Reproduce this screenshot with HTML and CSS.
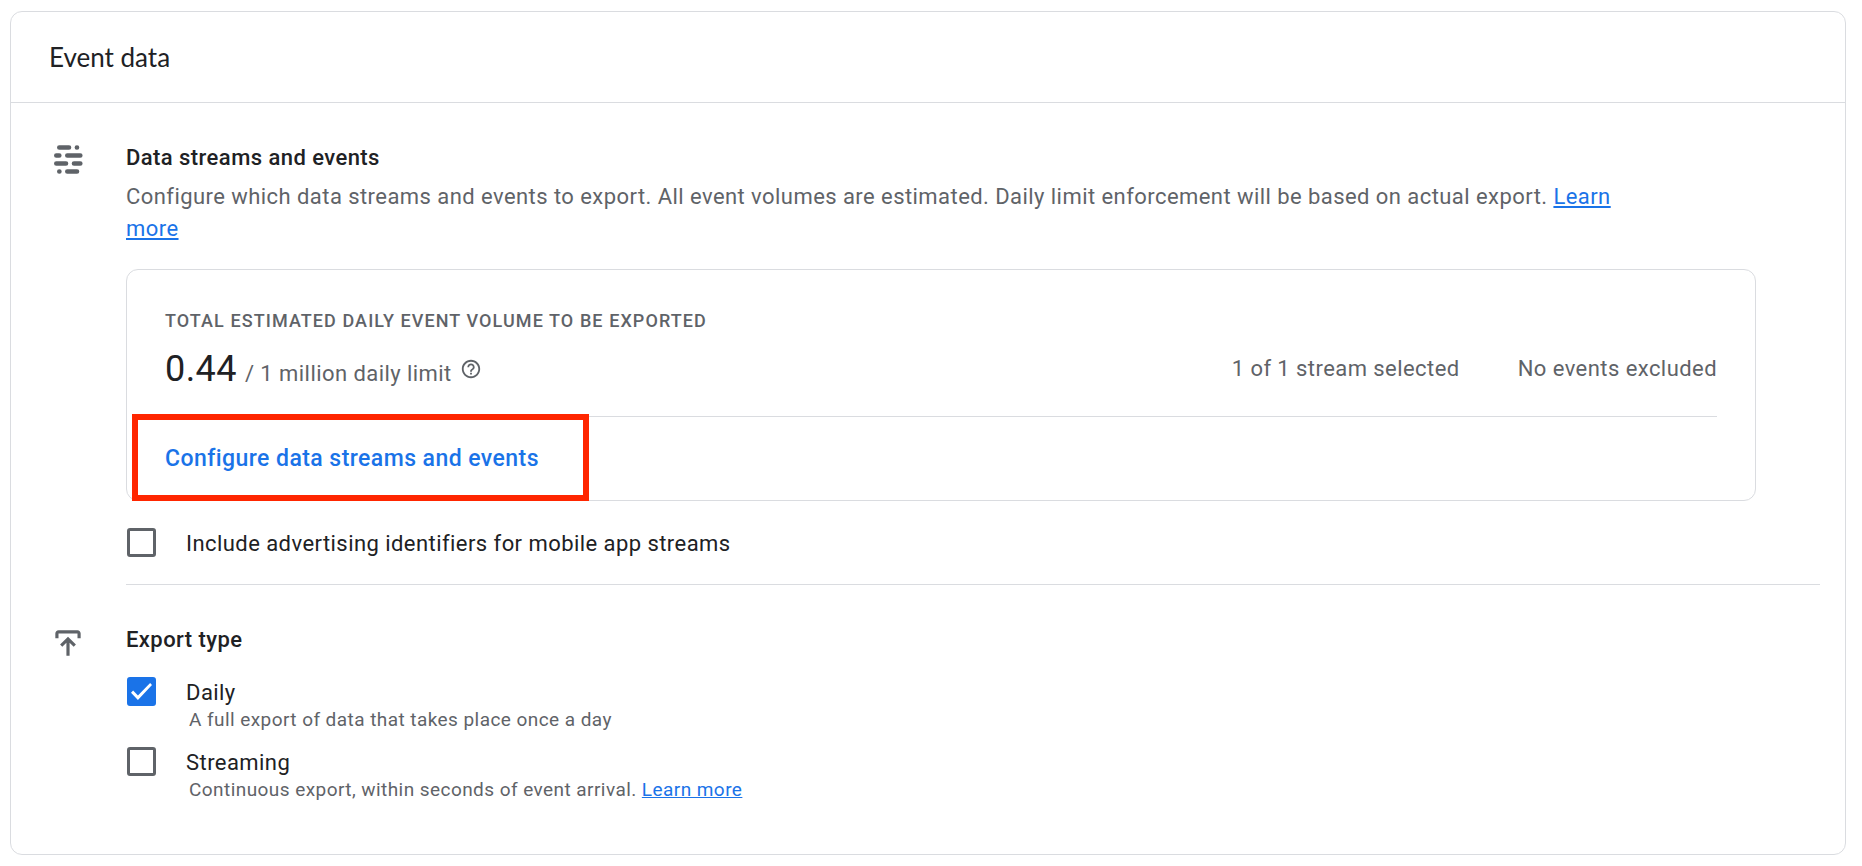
FILE: index.html
```html
<!DOCTYPE html>
<html lang="en">
    <head>
        <meta charset="utf-8">
        <title>Event data</title>
        <link rel="stylesheet" href="styles.css">
    </head>
    <body>
        <main class="card">
            <header class="card-header">
                <h1>Event data</h1>
            </header>

            <section class="section">
                <svg class="section-icon" viewBox="0 0 38 38" aria-hidden="true">
                    <g fill="none" stroke="currentColor" stroke-width="4.6" stroke-linecap="round">
                        <path d="M10.3 5.5H20M27.9 5.5h.1M7.3 13.5h3M18.3 13.5h13M7.3 21.5H17M25 21.5h6.3M10.3 29.5h.1M18.3 29.5H28"/>
                    </g>
                </svg>
                <div class="section-body with-divider">
                    <h2>Data streams and events</h2>
                    <p class="description">Configure which data streams and events to export. All event volumes are estimated. Daily limit enforcement will be based on actual export. <a href="#">Learn more</a></p>

                    <div class="volume">
                        <h3>Total estimated daily event volume to be exported</h3>
                        <div class="volume-row">
                            <p class="volume-total">
                                <span class="volume-number">0.44</span>
                                <span>/ 1 million daily limit</span>
                                <svg class="help-icon" viewBox="0 0 24 24" role="img" aria-label="Help">
                                    <path fill="currentColor" d="M11 18h2v-2h-2v2zm1-16C6.48 2 2 6.48 2 12s4.48 10 10 10 10-4.48 10-10S17.52 2 12 2zm0 18c-4.41 0-8-3.59-8-8s3.59-8 8-8 8 3.59 8 8-3.59 8-8 8zm0-14c-2.21 0-4 1.79-4 4h2c0-1.100.900-2 2-2s2 .9 2 2c0 2-3 1.750-3 5h2c0-2.250 3-2.500 3-5 0-2.210-1.790-4-4-4z"/>
                                </svg>
                            </p>
                            <p>1 of 1 stream selected</p>
                            <p>No events excluded</p>
                        </div>
                        <div class="volume-actions">
                            <button type="button">Configure data streams and events</button>
                        </div>
                        <div class="highlight"></div>
                    </div>

                    <div class="option">
                        <input type="checkbox" id="ad-ids">
                        <label for="ad-ids">Include advertising identifiers for mobile app streams</label>
                    </div>
                </div>
            </section>

            <section class="section">
                <svg class="section-icon" viewBox="0 0 24 24" aria-hidden="true">
                    <path fill="currentColor" d="M4 9V6c0-1.100.900-2 2-2h12c1.100 0 2 .9 2 2v3h-2V6H6v3zM11 20v-8.200l-2.600 2.600L7 13l5-5 5 5-1.400 1.400-2.600-2.600V20z"/>
                </svg>
                <div class="section-body">
                    <h2>Export type</h2>
                    <div class="option-list">
                        <div class="option">
                            <input type="checkbox" id="daily" checked>
                            <label for="daily">Daily</label>
                            <p class="hint">A full export of data that takes place once a day</p>
                        </div>
                        <div class="option">
                            <input type="checkbox" id="streaming">
                            <label for="streaming">Streaming</label>
                            <p class="hint">Continuous export, within seconds of event arrival. <a href="#">Learn more</a></p>
                        </div>
                    </div>
                </div>
            </section>
        </main>
    </body>
</html>
```
FILE: styles.css
```css
:root {
    --text-clr: #202124;
    --muted-clr: #5f6368;
    --link-clr: #1a73e8;
    --border-clr: #dadce0;
    --highlight-clr: #ff2600;
}

* {
    box-sizing: border-box;
}

body {
    margin: 11px 16px 11px 10px;
    background-color: #fff;
    color: var(--text-clr);
    font-family: Roboto, sans-serif;
    font-size: 22px;
    line-height: 32px;
    letter-spacing: 0.02em;
}

h1, h2, h3, p {
    margin: 0;
}

a {
    color: var(--link-clr);
}

.card {
    border: 1px solid var(--border-clr);
    border-radius: 12px;
    padding-bottom: 54px;
}

.card-header {
    padding: 29px 38px;
    border-bottom: 1px solid var(--border-clr);
}

h1 {
    font-family: Lato, sans-serif;
    font-size: 26px;
    font-weight: 400;
    letter-spacing: 0;
}

h2 {
    font-size: 22px;
    font-weight: 500;
}

.section {
    display: grid;
    grid-template-columns: 38px 1fr;
    gap: 39px;
    padding: 39px 25px 0 38px;
}

.section-icon {
    width: 38px;
    height: 38px;
    color: var(--muted-clr);
}

.with-divider {
    padding-bottom: 23px;
    border-bottom: 1px solid var(--border-clr);
}

.description {
    margin: 7px 160px 24px 0;
    color: var(--muted-clr);
}

/* daily volume box */

.volume {
    position: relative;
    margin: 0 64px 26px 0;
    padding: 39px 38px 0;
    border: 1px solid var(--border-clr);
    border-radius: 12px;
    color: var(--muted-clr);
}

h3 {
    font-size: 18px;
    font-weight: 500;
    line-height: 24px;
    letter-spacing: 0.06em;
    text-transform: uppercase;
}

.volume-row {
    display: flex;
    align-items: center;
    gap: 58px;
    padding: 12px 0 23px;
    border-bottom: 1px solid var(--border-clr);
}

.volume-total {
    display: flex;
    align-items: baseline;
    gap: 8px;
    margin-right: auto;
}

.volume-number {
    color: var(--text-clr);
    font-size: 36px;
    line-height: 48px;
}

.help-icon {
    align-self: center;
    width: 22px;
    height: 22px;
}

.volume-actions {
    display: flex;
    align-items: center;
    height: 83px;
}

button {
    padding: 0;
    border: none;
    background: none;
    color: var(--link-clr);
    font-family: inherit;
    font-size: 23px;
    font-weight: 500;
    letter-spacing: inherit;
    cursor: pointer;
}

.highlight {
    position: absolute;
    left: 5px;
    bottom: -1px;
    width: 457px;
    height: 87px;
    border: 6px solid var(--highlight-clr);
    pointer-events: none;
}

/* checkboxes */

.option-list {
    display: grid;
    gap: 16px;
    margin-top: 20px;
}

.option {
    display: grid;
    grid-template-columns: 29px 1fr;
    align-items: start;
    column-gap: 30px;
    padding-left: 1px;
}

.option label {
    line-height: 34px;
}

input {
    appearance: none;
    width: 29px;
    height: 29px;
    margin: 1px 0 0;
    border: 3px solid var(--muted-clr);
    border-radius: 3px;
}

input:checked {
    display: grid;
    place-items: center;
    border-color: var(--link-clr);
    background-color: var(--link-clr);
}

input:checked::before {
    content: "";
    width: 21px;
    height: 17px;
    background-color: #fff;
    clip-path: polygon(0 57%, 10% 44%, 33% 74%, 91% 0, 100% 12%, 33% 100%);
}

.hint {
    grid-column: 2;
    padding-left: 3px;
    color: var(--muted-clr);
    font-size: 19px;
    line-height: 20px;
}
```
